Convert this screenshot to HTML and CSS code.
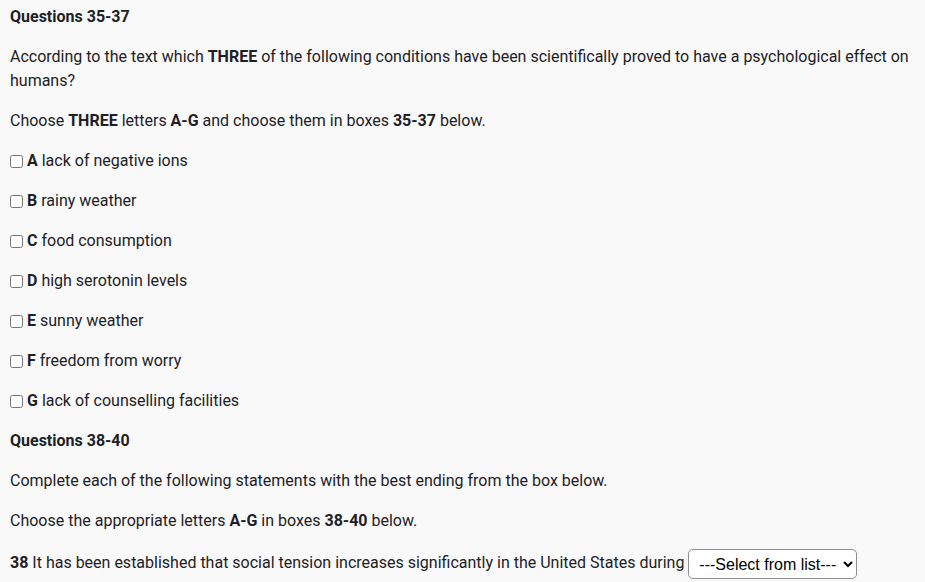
FILE: index.html
```html
<!DOCTYPE html>
<html>
<head>
<meta charset="utf-8">
<link rel="stylesheet" href="styles.css">
</head>
<body>
<div class="page">
  <p><strong>Questions 35-37</strong></p>
  <p>According to the text which <strong>THREE</strong> of the following conditions have been scientifically proved to have a psychological effect on humans?</p>
  <p>Choose <strong>THREE</strong> letters <strong>A-G</strong> and choose them in boxes <strong>35-37</strong> below.</p>
  <p class="opt"><input type="checkbox" class="cb"><strong>A</strong> lack of negative ions</p>
  <p class="opt"><input type="checkbox" class="cb"><strong>B</strong> rainy weather</p>
  <p class="opt"><input type="checkbox" class="cb"><strong>C</strong> food consumption</p>
  <p class="opt"><input type="checkbox" class="cb"><strong>D</strong> high serotonin levels</p>
  <p class="opt"><input type="checkbox" class="cb"><strong>E</strong> sunny weather</p>
  <p class="opt"><input type="checkbox" class="cb"><strong>F</strong> freedom from worry</p>
  <p class="opt"><input type="checkbox" class="cb"><strong>G</strong> lack of counselling facilities</p>
  <p><strong>Questions 38-40</strong></p>
  <p>Complete each of the following statements with the best ending from the box below.</p>
  <p>Choose the appropriate letters <strong>A-G</strong> in boxes <strong>38-40</strong> below.</p>
  <p><strong>38</strong> It has been established that social tension increases significantly in the United States during <select class="sel"><option>---Select from list---</option></select></p>
</div>
</body>
</html>
```
FILE: styles.css
```css
html, body {
  margin: 0;
  padding: 0;
  background: #f9f9f9;
}
.page {
  padding: 5px 10px 0 10px;
  font-family: Roboto, "Noto Sans", sans-serif;
  font-size: 16px;
  line-height: 24px;
  color: #1d2125;
}
.page p {
  margin: 0 0 16px 0;
}
.page strong {
  font-weight: 700;
}
.cb {
  width: 13px;
  height: 13px;
  margin: 0 4px 0 0;
  vertical-align: -2px;
}
.sel {
  font-family: "Liberation Sans", Arial, sans-serif;
  font-size: 16px;
  height: 30px;
  padding: 0 4px 0 6px;
  border: 1px solid #8f8f8f;
  border-radius: 5px;
  background: #fff;
  color: #000;
  vertical-align: middle;
}
```
